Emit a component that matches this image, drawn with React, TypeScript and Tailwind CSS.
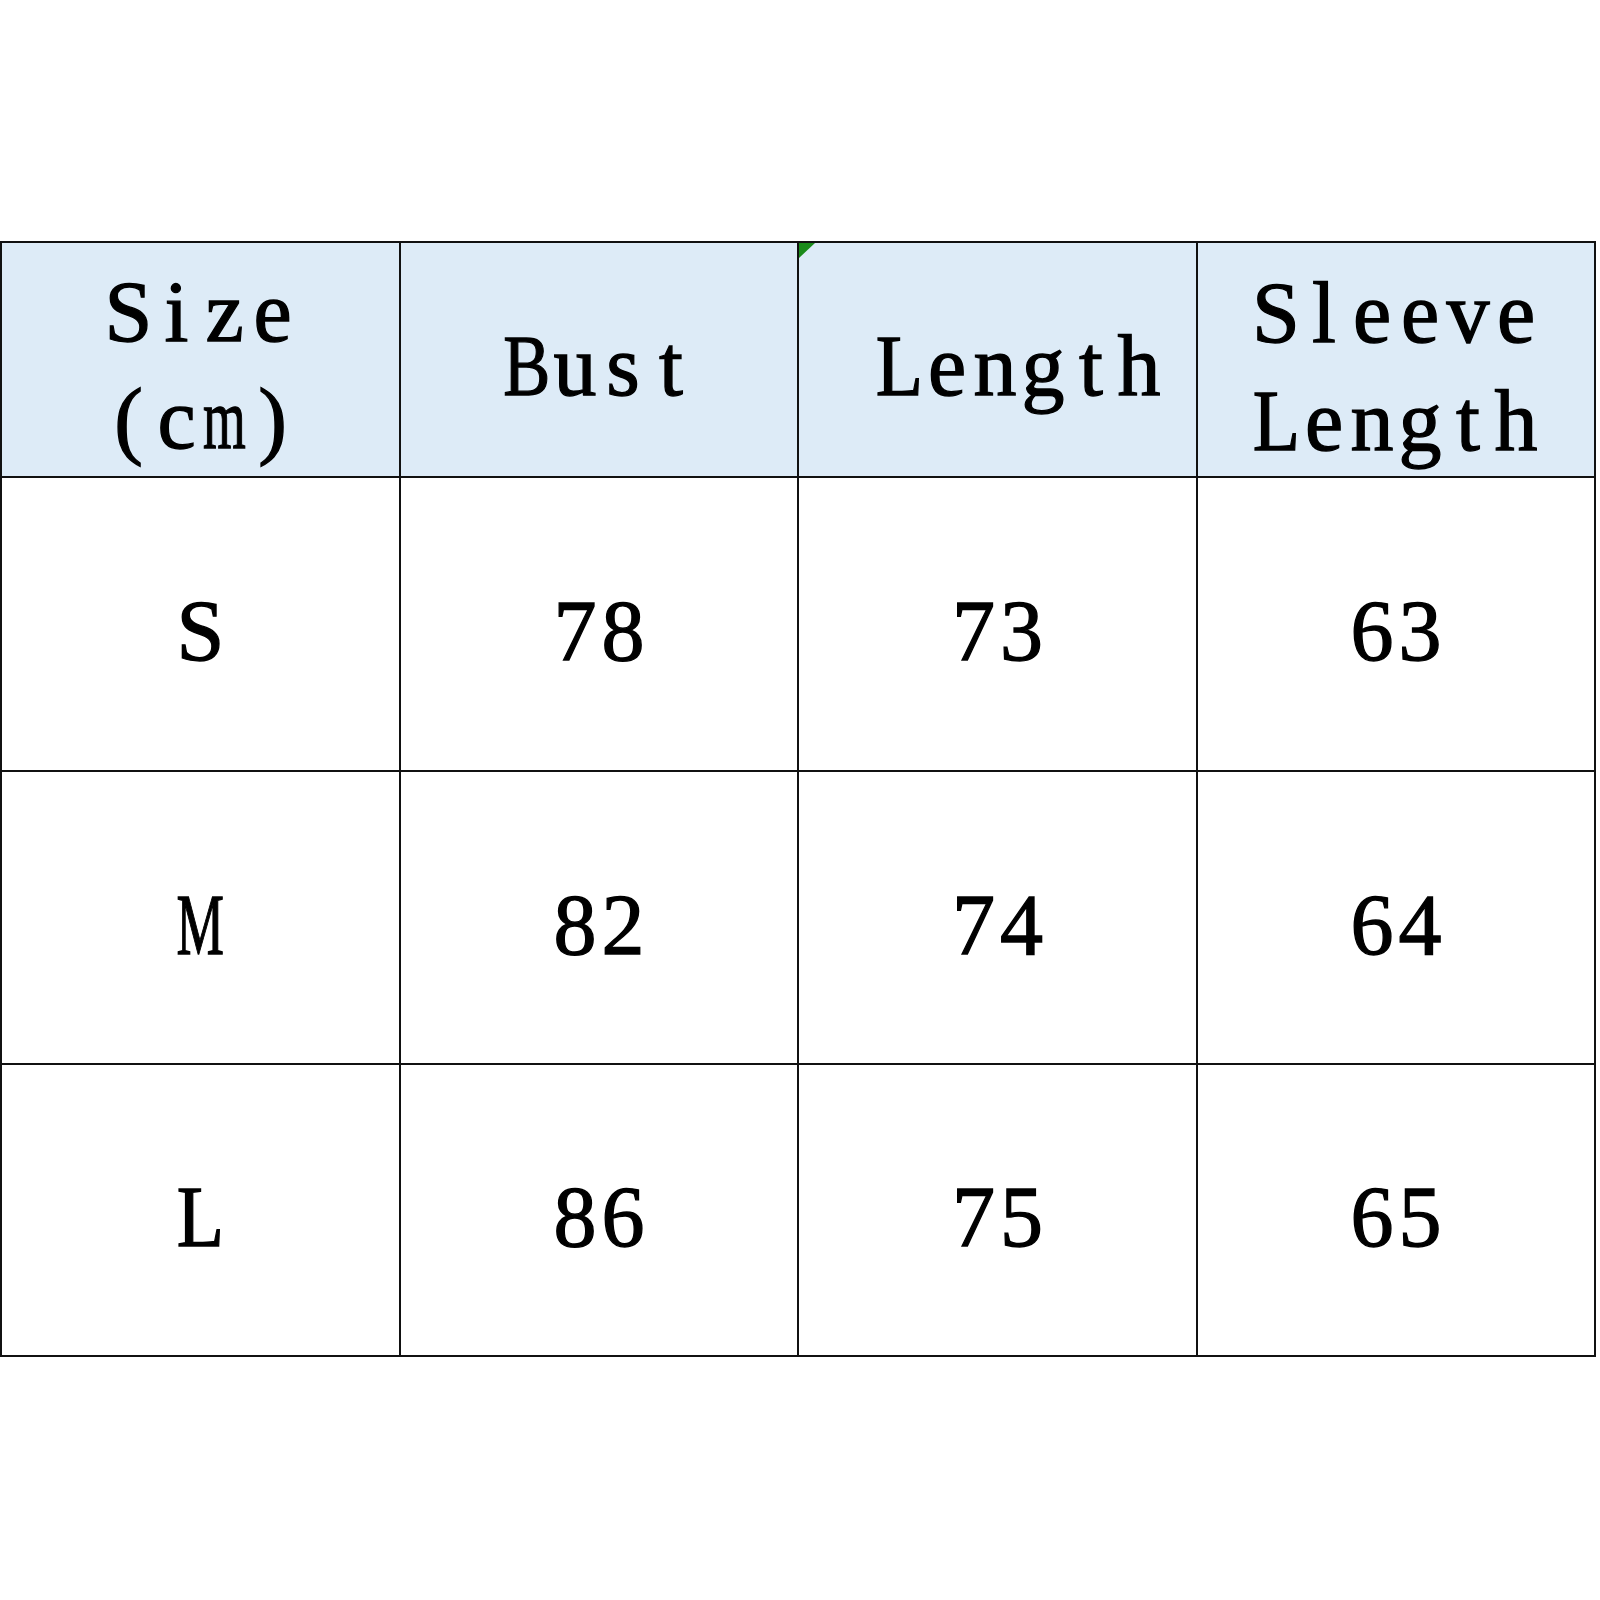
import React from "react";

const font = { fontFamily: '"Liberation Serif", "Times New Roman", serif' };

const squeeze: Record<string, string> = {
  M: "scale-x-[0.62]",
  m: "scale-x-[0.64]",
  B: "scale-x-[0.82]",
  L: "scale-x-[0.9]",
};

function Mono({ text }: { text: string }) {
  return (
    <span className="inline-flex">
      {text.split("").map((ch, i) => (
        <span key={i} className="inline-flex w-[48px] justify-center">
          <span className={`inline-block ${squeeze[ch] ?? ""}`}>{ch}</span>
        </span>
      ))}
    </span>
  );
}

export default function App() {
  const rows = [
    ["S", "78", "73", "63"],
    ["M", "82", "74", "64"],
    ["L", "86", "75", "65"],
  ];
  return (
    <div className="w-[1600px] h-[1600px] bg-white" style={font}>
      <div className="pt-[241px]">
        <div className="w-[1596px] bg-[#111] p-[2px] grid grid-cols-[397px_396px_397px_396px] grid-rows-[233px_292px_291px_290px] gap-[2px] text-black text-[86px] [-webkit-text-stroke:1.3px_#000]">
          <div className="bg-[#ddebf7] flex flex-col items-center justify-center pt-[13px] leading-[107px]">
            <Mono text="Size" />
            <Mono text="(cm)" />
          </div>
          <div className="bg-[#ddebf7] flex items-center justify-center pt-[14px]">
            <Mono text="Bust" />
          </div>
          <div className="relative bg-[#ddebf7] flex items-center justify-center pt-[14px] pl-[43px]">
            <svg className="absolute left-0 top-0" width="16" height="15" viewBox="0 0 16 15">
              <polygon points="0,0 16,0 0,15" fill="#1a8a1a" />
            </svg>
            <Mono text="Length" />
          </div>
          <div className="bg-[#ddebf7] flex flex-col items-center justify-center pt-[15px] leading-[108px]">
            <Mono text="Sleeve" />
            <Mono text="Length" />
          </div>
          {rows.map((r, i) =>
            r.map((c, j) => (
              <div key={`${i}-${j}`} className="bg-white flex items-center justify-center pt-[15px]">
                <Mono text={c} />
              </div>
            ))
          )}
        </div>
      </div>
    </div>
  );
}
